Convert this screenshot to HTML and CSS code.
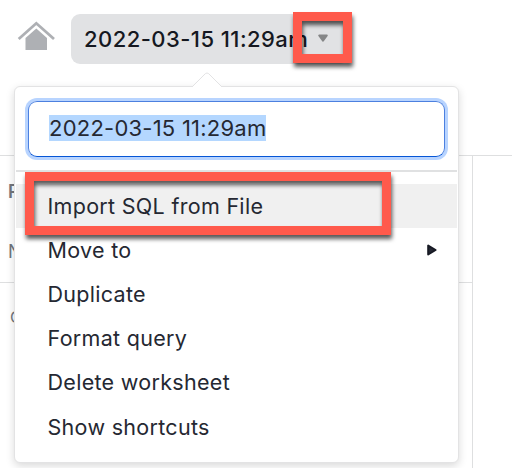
FILE: index.html
```html
<!DOCTYPE html>
<html lang="en">
<head>
<meta charset="utf-8">
<title>Worksheet</title>
<link rel="stylesheet" href="styles.css">
</head>
<body>
<header class="topbar">
  <svg class="home" width="38" height="32" viewBox="0 0 38 32">
    <path d="M1.700 20 L19.300 4.300 L37 20" fill="none" stroke="#aeb0b4" stroke-width="2.800"/>
    <path d="M8.500 31V19L19.300 9.500L30 19V31Z" fill="#aeb0b4"/>
  </svg>
  <button class="title"><span>2022-03-15 11:29am</span>
    <svg class="caret" width="12" height="9" viewBox="0 0 12 9"><path d="M2.200 1.500H9.800L6 6.700Z" fill="#858687" stroke="#858687" stroke-width="2" stroke-linejoin="round"/></svg>
  </button>
</header>
<main class="workspace">
  <aside class="side">
    <div class="side-top"><div class="pinned">P</div><div class="none">N</div></div>
    <div class="search">Q</div>
  </aside>
</main>
<section class="menu">
  <svg class="pointer" width="32" height="16" viewBox="0 0 32 16"><path d="M1 15L14.300 1.700Q16 .2 17.700 1.700L31 15V16H1Z" fill="#fff"/><path d="M1 15L14.300 1.700Q16 .2 17.700 1.700L31 15" fill="none" stroke="#e3e3e4"/></svg>
  <div class="field"><span class="selected">2022-03-15 11:29am</span></div>
  <ul class="items">
    <li class="active"><span>Import SQL from File</span></li>
    <li><span>Move to</span><svg width="11" height="12" viewBox="0 0 11 12"><path d="M2.200 1.500V10.500L9.600 6Z" fill="#252833" stroke="#171a24" stroke-width="2" stroke-linejoin="round"/></svg></li>
    <li><span>Duplicate</span></li>
    <li><span>Format query</span></li>
    <li><span>Delete worksheet</span></li>
    <li><span>Show shortcuts</span></li>
  </ul>
</section>
<div class="mark mark-caret"></div>
<div class="mark mark-import"></div>
</body>
</html>
```
FILE: styles.css
```css
* { box-sizing: border-box; }
body {
  margin: 0;
  width: 512px;
  height: 468px;
  overflow: hidden;
  position: relative;
  display: flex;
  flex-direction: column;
  background: #fff;
  color: #252832;
  font-family: Inter, "Liberation Sans", sans-serif;
}
.topbar {
  height: 155px;
  padding: 14px 0 0 17px;
  display: flex;
  align-items: flex-start;
  gap: 16px;
}
.home { margin-top: 5px; }
.title {
  width: 278px;
  height: 50px;
  padding: 0 0 1px 13px;
  border: 0;
  border-radius: 9px;
  background: #e1e2e4;
  display: flex;
  align-items: center;
  gap: 9px;
  color: #151821;
  font: 550 22px Inter, sans-serif;
  letter-spacing: 0.45px;
  white-space: nowrap;
}
.workspace { flex: 1; border-top: 1px solid #dedfe0; }
.side {
  width: 473px;
  height: 100%;
  border-right: 1px solid #dedfe0;
  color: #72757c;
  font-size: 18px;
}
.side-top {
  height: 127px;
  padding: 25px 0 0 8px;
  border-bottom: 1px solid #dedfe0;
}
.pinned { height: 60px; font-weight: 600; }
.search { padding: 24px 0 0 10px; font-size: 16px; }
.menu {
  position: absolute;
  left: 14px;
  top: 86px;
  width: 445px;
  height: 377px;
  padding: 14px 1px 0;
  border: 1px solid #e3e3e4;
  border-radius: 6px;
  background: #fff;
  box-shadow: 0 3px 8px rgba(0, 0, 0, .15);
}
.pointer { position: absolute; left: 176px; top: -15px; }
.field {
  height: 56px;
  margin: 0 12px;
  padding: 0 20px 2px;
  border: 1px solid #4c80df;
  border-bottom-color: #0656d6;
  border-radius: 9px;
  box-shadow: 0 0 0 3px #b8d4ff;
  display: flex;
  align-items: center;
  font-size: 22px;
  letter-spacing: 0.23px;
}
.selected { background: #b4d7ff; line-height: 26px; white-space: nowrap; }
.items {
  margin: 13px 0 0;
  padding: 12px 0 0;
  border-top: 2px solid #e0e1e2;
  list-style: none;
}
.items li {
  height: 44.1px;
  padding: 0 20px 0 31.5px;
  display: flex;
  align-items: center;
  justify-content: space-between;
  font-size: 21.5px;
  letter-spacing: 0.3px;
}
.items .active { background: #f0f0f0; }
.mark {
  position: absolute;
  border: 9px solid #ff5a4c;
  filter: drop-shadow(1px 4px 2px rgba(0, 0, 0, .65));
}
.mark-caret { left: 293px; top: 12px; width: 59px; height: 51px; }
.mark-import { left: 25px; top: 172px; width: 366px; height: 63px; }
```
